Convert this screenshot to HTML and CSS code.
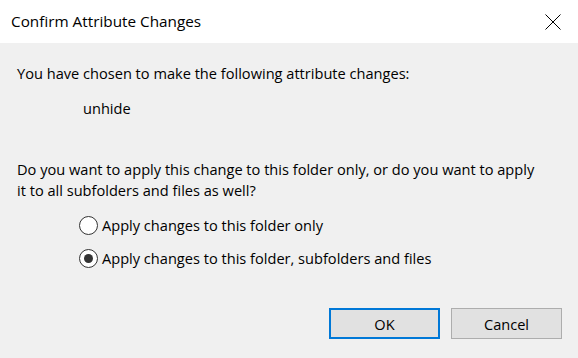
FILE: index.html
```html
<!DOCTYPE html>
<html>
<head>
<meta charset="utf-8">
<link rel="stylesheet" href="styles.css">
</head>
<body>
<div class="dialog">
  <div class="titlebar">
    <span class="title">Confirm Attribute Changes</span>
    <span class="close">
      <svg width="16" height="16" viewBox="0 0 16 16"><path d="M0.5 0.5 L15.5 15.5 M15.5 0.5 L0.5 15.5" stroke="#000" stroke-width="1" fill="none"/></svg>
    </span>
  </div>
  <div class="content">
    <p class="intro">You have chosen to make the following attribute changes:</p>
    <p class="change">unhide</p>
    <p class="question">Do you want to apply this change to this folder only, or do you want to apply it to all subfolders and files as well?</p>
    <div class="options">
      <label class="option"><span class="radio"></span>Apply changes to this folder only</label>
      <label class="option"><span class="radio checked"></span>Apply changes to this folder, subfolders and files</label>
    </div>
    <div class="buttons">
      <button class="btn default">OK</button>
      <button class="btn">Cancel</button>
    </div>
  </div>
</div>
</body>
</html>
```
FILE: styles.css
```css
html, body {
  margin: 0;
  padding: 0;
  background: #f0f0f0;
}
.dialog {
  width: 578px;
  height: 358px;
  display: flex;
  flex-direction: column;
  font-family: "Open Sans", "Noto Sans", sans-serif;
  color: #000;
}
.titlebar {
  height: 43px;
  background: #fff;
  display: flex;
  align-items: center;
  justify-content: space-between;
  padding: 0 17px 0 11px;
}
.title {
  font-size: 15.3px;
  padding-bottom: 2px;
}
.close {
  display: flex;
  width: 16px;
  height: 16px;
  margin-top: 1px;
}
.content {
  flex: 1;
  display: flex;
  flex-direction: column;
  padding: 0 16px 0 17px;
  font-size: 14.6px;
}
.content p {
  margin: 0;
}
.intro {
  margin-top: 20px !important;
  line-height: 20px;
}
.change {
  margin-top: 15px !important;
  padding-left: 66px;
  line-height: 20px;
}
.question {
  margin-top: 41px !important;
  line-height: 21px;
  max-width: 525px;
}
.options {
  display: flex;
  flex-direction: column;
  gap: 13px;
  margin-top: 14px;
  padding-left: 62px;
}
.option {
  display: flex;
  align-items: center;
  gap: 4px;
  line-height: 20px;
}
.radio {
  width: 19px;
  height: 19px;
  border: 1px solid #333;
  border-radius: 50%;
  background: #fff;
  display: flex;
  align-items: center;
  justify-content: center;
  box-sizing: border-box;
}
.radio.checked::after {
  content: "";
  width: 9px;
  height: 9px;
  border-radius: 50%;
  background: #333;
}
.buttons {
  display: flex;
  justify-content: flex-end;
  gap: 11px;
  margin-top: auto;
  margin-bottom: 19px;
}
.btn {
  width: 111px;
  height: 31px;
  background: #e1e1e1;
  border: 1px solid #adadad;
  font-family: inherit;
  font-size: 14.6px;
  color: #000;
  padding: 0;
}
.btn.default {
  border: 2px solid #0078d7;
}
```
